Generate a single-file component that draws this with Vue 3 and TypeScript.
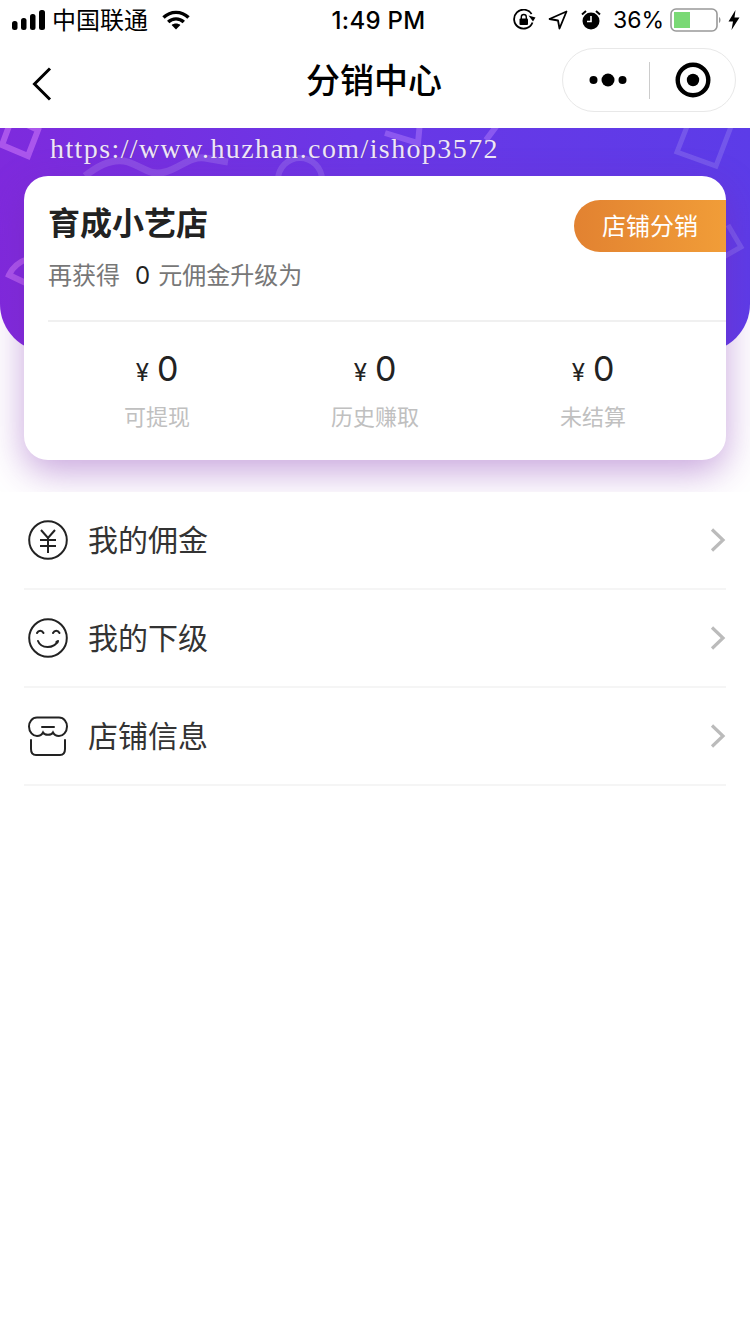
<script setup lang="ts">
interface Stat {
  label: string;
  value: string;
}

interface MenuRow {
  name: string;
  icon: 'money' | 'smile' | 'shop';
}

const stats: Stat[] = [
  { label: '可提现', value: '0' },
  { label: '历史赚取', value: '0' },
  { label: '未结算', value: '0' }
]

const menuRows: MenuRow[] = [
  { name: '我的佣金', icon: 'money' },
  { name: '我的下级', icon: 'smile' },
  { name: '店铺信息', icon: 'shop' }
]
</script>

<template>
  <div class="page">
    <div class="status-bar">
      <div class="status-left">
        <svg class="signal" width="33" height="20" viewBox="0 0 33 20" fill="#000">
          <rect x="0" y="11" width="5.5" height="9" rx="2.5" />
          <rect x="9" y="8" width="5.5" height="12" rx="2.5" />
          <rect x="18" y="4" width="5.5" height="16" rx="2.5" />
          <rect x="27" y="0" width="6" height="20" rx="2.5" />
        </svg>
        <span class="carrier">中国联通</span>
        <svg class="wifi" width="28" height="20" viewBox="0 0 28 20" fill="none" stroke="#000" stroke-width="3.4">
          <path d="M1.5 7.5C8.5 .6 19.5 .6 26.5 7.5" />
          <path d="M6.2 12C10.6 7.8 17.4 7.8 21.8 12" />
          <path d="M14 19.5L9.6 15C12 13 16 13 18.4 15Z" fill="#000" stroke="none" />
        </svg>
      </div>
      <span class="time">1:49 PM</span>
      <div class="status-right">
        <svg width="23" height="22" viewBox="0 0 23 22" fill="none" stroke="#000" stroke-width="1.8">
          <path d="M19.5 13.5A9.5 9.5 0 1 1 18.6 5" />
          <path d="M15.5 6.5L22.5 8.5L20 12.5Z" fill="#000" stroke="none" />
          <rect x="6.5" y="9.5" width="8.5" height="6.5" rx="1" fill="#000" stroke="none" />
          <path d="M8.3 10V8a2.5 2.5 0 0 1 5 0v2" stroke-width="1.4" />
        </svg>
        <svg class="location" width="20" height="20" viewBox="0 0 20 20" fill="none" stroke="#000" stroke-width="1.8" stroke-linejoin="round">
          <path d="M18.5 1.5L1.5 9L10 10.5L11.5 18.5Z" />
        </svg>
        <svg class="alarm" width="20" height="20" viewBox="0 0 20 20">
          <circle cx="10" cy="11" r="8.5" fill="#000" />
          <path d="M10 6V11.5H6" fill="none" stroke="#fff" stroke-width="1.6" />
          <path d="M1 4.5L5 1M19 4.5L15 1" stroke="#000" stroke-width="2" />
        </svg>
        <span class="percent">36%</span>
        <svg class="battery" width="52" height="24" viewBox="0 0 52 24">
          <rect x="1" y="1" width="46" height="22" rx="5" fill="#fff" stroke="#999" stroke-width="1.6" />
          <rect x="4" y="4" width="16" height="16" fill="#7ad975" />
          <path d="M49 9C51 10 51 14 49 15Z" fill="#999" />
        </svg>
        <svg class="bolt" width="12" height="20" viewBox="0 0 12 20" fill="#000">
          <path d="M7.5 0L0.5 11.5H5L3.5 20L11.5 7.5H6.5Z" />
        </svg>
      </div>
    </div>

    <div class="nav">
      <svg class="back" width="20" height="34" viewBox="0 0 20 34" fill="none" stroke="#000" stroke-width="3">
        <path d="M18 1.5L2.5 17L18 32.5" />
      </svg>
      <span class="nav-title">分销中心</span>
      <div class="capsule">
        <svg width="40" height="16" viewBox="0 0 40 16" fill="#000">
          <circle cx="4.5" cy="8" r="4" />
          <circle cx="19" cy="8" r="6.5" />
          <circle cx="33.5" cy="8" r="4" />
        </svg>
        <span class="capsule-line"></span>
        <svg width="36" height="36" viewBox="0 0 36 36">
          <circle cx="18" cy="18" r="15.3" fill="none" stroke="#000" stroke-width="4.4" />
          <circle cx="18" cy="18" r="6.2" fill="#000" />
        </svg>
      </div>
    </div>

    <div class="hero">
      <svg class="hero-shapes" width="750" height="224" viewBox="0 0 750 224" fill="none" stroke="#fff" stroke-opacity=".14" stroke-width="6">
        <path d="M12 -10L38 2L28 28L2 17Z" stroke="#e28bff" stroke-opacity=".45" />
        <path d="M85 48C100 36 115 30 128 34C145 40 150 48 165 44C180 40 190 28 205 30L228 34" stroke-width="7" />
        <circle cx="300" cy="52" r="22" />
        <path d="M30 130C18 134 12 140 9 147L30 157" stroke="#e28bff" stroke-opacity=".45" />
        <path d="M385 5L418 15L420 -6M498 -4L486 12" stroke="#c08aff" stroke-opacity=".4" />
        <path d="M688 -4L677 24L716 38L732 -4" stroke-width="5" />
        <path d="M728 97L741 119L720 131" stroke-width="5" />
      </svg>
      <p class="url">https://www.huzhan.com/ishop3572</p>
    </div>

    <div class="card">
      <div class="card-head">
        <div class="shop">
          <h1 class="shop-name">育成小艺店</h1>
          <p class="shop-tip">再获得<b>0</b>元佣金升级为</p>
        </div>
        <span class="badge">店铺分销</span>
      </div>
      <div class="stats">
        <div v-for="item in stats" :key="item.label" class="stat">
          <div class="stat-value"><small>¥</small>{{ item.value }}</div>
          <div class="stat-label">{{ item.label }}</div>
        </div>
      </div>
    </div>

    <div class="menu">
      <div v-for="row in menuRows" :key="row.name" class="menu-row">
        <svg v-if="row.icon === 'money'" class="menu-icon" width="40" height="40" viewBox="0 0 40 40" fill="none" stroke="#222" stroke-width="2">
          <circle cx="20" cy="20" r="18.8" />
          <path d="M13 10L20 18L27 10M12 20H28M12 26H28M20 18V33" />
        </svg>
        <svg v-else-if="row.icon === 'smile'" class="menu-icon" width="40" height="40" viewBox="0 0 40 40" fill="none" stroke="#222" stroke-width="2">
          <circle cx="20" cy="20" r="18.8" />
          <path d="M9 15C10.5 12 14 12 15.5 15M25 15C26.5 12 30 12 31.5 15" stroke-linecap="round" />
          <path d="M10 23C13 31 26 31 30 23" stroke-linecap="round" />
          <circle cx="29" cy="24" r="1.6" fill="#222" stroke="none" />
        </svg>
        <svg v-else class="menu-icon" width="40" height="40" viewBox="0 0 40 40" fill="none" stroke="#222" stroke-width="2" stroke-linecap="round">
          <path d="M9 1.5H31C36 1.5 39 6 39 10.5C39 16 35 20 31 20C28 20 26 18.5 25 16.5C23.5 19.5 16.5 19.5 15 16.5C14 18.5 12 20 9 20C5 20 1 16 1 10.5C1 6 4 1.5 9 1.5Z" />
          <path d="M14 11H26" />
          <path d="M3 24V33C3 37 5 39 8 39H32C35 39 37 37 37 33V24" />
        </svg>
        <span class="menu-name">{{ row.name }}</span>
        <svg class="arrow" width="16" height="24" viewBox="0 0 16 24" fill="none" stroke="#bbb" stroke-width="3.2">
          <path d="M2 1.5L13 12L2 22.5" />
        </svg>
      </div>
    </div>
  </div>
</template>

<style scoped>
.page {
  width: 750px;
  min-height: 1334px;
  background: #fff;
  font-family: "Noto Sans CJK SC", "Liberation Sans", sans-serif;
  color: #222;
  overflow: hidden;
}

.status-bar {
  height: 40px;
  display: grid;
  grid-template-columns: 1fr auto 1fr;
  align-items: center;
  padding: 0 10px 0 12px;
  color: #000;
}

.status-left,
.status-right {
  display: flex;
  align-items: center;
}

.status-right {
  justify-content: flex-end;
}

.carrier {
  font-size: 24px;
  margin: 0 0 4px 7px;
}

.wifi {
  margin-left: 14px;
}

.time {
  font-family: "Inter", "Liberation Sans", sans-serif;
  font-size: 24px;
  font-weight: 500;
  letter-spacing: .3px;
  margin-left: 5px;
}

.location {
  margin-left: 12px;
}

.alarm {
  margin-left: 13px;
}

.percent {
  font-family: "Inter", "Liberation Sans", sans-serif;
  font-size: 23px;
  margin-left: 12px;
}

.battery {
  margin-left: 6px;
}

.bolt {
  margin-left: 6px;
}

.nav {
  height: 88px;
  box-sizing: border-box;
  display: flex;
  align-items: center;
  position: relative;
  padding: 0 14px 8px 32px;
  justify-content: space-between;
}

.back {
  margin-top: 8px;
}

.nav-title {
  position: absolute;
  left: 0;
  right: 2px;
  margin-top: -4px;
  text-align: center;
  font-size: 34px;
  font-weight: 500;
  color: #000;
}

.capsule {
  width: 174px;
  height: 64px;
  box-sizing: border-box;
  border: 1px solid #e8e8e8;
  border-radius: 32px;
  display: flex;
  align-items: center;
  padding-left: 26px;
  background: #fff;
}

.capsule-line {
  width: 1px;
  height: 37px;
  background: #ccc;
  margin: 0 25px 0 20px;
}

.hero {
  height: 224px;
  position: relative;
  overflow: hidden;
  background: linear-gradient(80deg, #8029dc 0%, #6a37e6 50%, #5c3ce8 100%);
  border-radius: 0 0 48px 48px;
}

.hero-shapes {
  position: absolute;
  left: 0;
  top: 0;
}

.url {
  position: relative;
  margin: 0;
  padding: 3px 0 0 50px;
  font-family: "Liberation Serif", serif;
  font-size: 28px;
  line-height: 36px;
  letter-spacing: 1.4px;
  color: #eee6fb;
  text-shadow: 1px 0 0 rgba(60, 60, 60, .35);
}

.card {
  position: relative;
  box-sizing: border-box;
  width: 702px;
  height: 284px;
  margin: -176px 0 32px 24px;
  background: #fff;
  border-radius: 24px;
  box-shadow: 0 12px 36px rgba(125, 40, 175, .42);
}

.card-head {
  height: 146px;
  box-sizing: border-box;
  margin-left: 24px;
  border-bottom: 2px solid #f0f0f0;
  display: flex;
  justify-content: space-between;
  align-items: flex-start;
}

.shop {
  padding-top: 21px;
}

.shop-name {
  margin: 0;
  font-size: 32px;
  line-height: 48px;
  font-weight: 700;
  color: #222;
}

.shop-tip {
  margin: 11px 0 0;
  font-size: 24px;
  line-height: 36px;
  color: #777;
}

.shop-tip b {
  font-family: "Inter", "Liberation Sans", sans-serif;
  font-weight: 400;
  color: #222;
  margin: 0 8px 0 15px;
}

.badge {
  margin-top: 24px;
  width: 152px;
  height: 52px;
  line-height: 50px;
  text-align: center;
  font-size: 24px;
  color: #fff;
  border-radius: 26px 0 0 26px;
  background: linear-gradient(90deg, #e28231, #f19d38);
}

.stats {
  display: grid;
  grid-template-columns: repeat(3, 218px);
  margin-left: 24px;
}

.stat {
  text-align: center;
  padding-top: 25px;
}

.stat-value {
  font-family: "Inter", "Liberation Sans", sans-serif;
  font-size: 34px;
  line-height: 44px;
  color: #222;
}

.stat-value small {
  font-size: 24px;
  margin-right: 8px;
}

.stat-label {
  margin-top: 4px;
  font-size: 22px;
  line-height: 32px;
  color: #c0c0c0;
}

.menu {
  position: relative;
  background: #fff;
  padding: 0 24px;
}

.menu-row {
  height: 98px;
  box-sizing: border-box;
  display: flex;
  align-items: center;
  border-bottom: 2px solid #f5f5f5;
  padding-left: 4px;
}

.menu-name {
  flex: 1;
  margin: 0 0 4px 20px;
  font-size: 30px;
  color: #333;
}
</style>

<style>
html,
body {
  margin: 0;
  background: #fff;
}
</style>
